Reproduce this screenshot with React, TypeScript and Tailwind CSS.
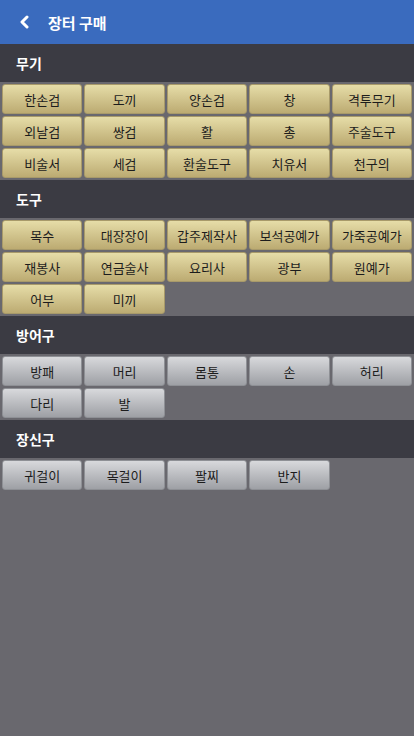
import React from "react";

type Section = {
  title: string;
  tone: "gold" | "silver";
  items: string[];
};

const sections: Section[] = [
  {
    title: "무기",
    tone: "gold",
    items: ["한손검", "도끼", "양손검", "창", "격투무기", "외날검", "쌍검", "활", "총", "주술도구", "비술서", "세검", "환술도구", "치유서", "천구의"],
  },
  {
    title: "도구",
    tone: "gold",
    items: ["목수", "대장장이", "갑주제작사", "보석공예가", "가죽공예가", "재봉사", "연금술사", "요리사", "광부", "원예가", "어부", "미끼"],
  },
  {
    title: "방어구",
    tone: "silver",
    items: ["방패", "머리", "몸통", "손", "허리", "다리", "발"],
  },
  {
    title: "장신구",
    tone: "silver",
    items: ["귀걸이", "목걸이", "팔찌", "반지"],
  },
];

const App: React.FC = () => {
  return (
    <div
      className="min-h-[736px] w-[414px] bg-[#69686e]"
      style={{ fontFamily: '"Noto Sans CJK KR", "Noto Sans", sans-serif' }}
    >
      {/* top bar */}
      <div className="flex h-[44px] items-center bg-[#3a6bbe] pl-[18px] text-white">
        <svg width="12" height="14" viewBox="0 0 12 14" className="mr-[18px]">
          <path d="M9 2 L4 7 L9 12" fill="none" stroke="white" strokeWidth="3" strokeLinecap="round" strokeLinejoin="round" />
        </svg>
        <span className="text-[15px] font-bold leading-none">장터 구매</span>
      </div>

      {sections.map((section) => (
        <div key={section.title}>
          <div className="flex h-[38px] items-center bg-[#3b3b43] pl-[16px] text-[14px] font-bold text-white">
            {section.title}
          </div>
          <div className="grid grid-cols-5 gap-[2px] p-[2px]">
            {section.items.map((item) => (
              <button
                key={item}
                type="button"
                className={
                  section.tone === "gold"
                    ? "h-[30px] rounded-[3px] border border-[#a89a6a] bg-gradient-to-b from-[#e6dda8] to-[#bcab72] text-[13px] leading-none text-[#1c1c1c]"
                    : "h-[30px] rounded-[3px] border border-[#8e9095] bg-gradient-to-b from-[#d8d9dc] to-[#9ea0a5] text-[13px] leading-none text-[#1c1c1c]"
                }
              >
                {item}
              </button>
            ))}
          </div>
        </div>
      ))}
    </div>
  );
};

export default App;
